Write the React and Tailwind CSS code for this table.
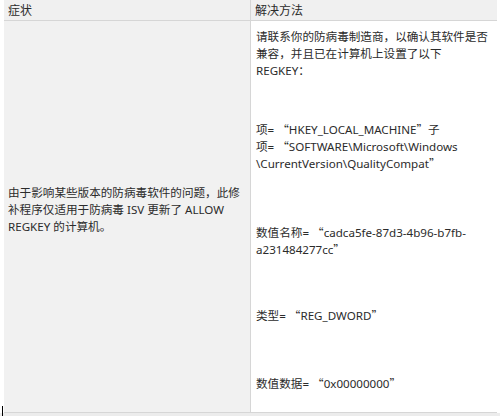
import React from 'react';

const Q = ({ children }) => (
  <span className="[font-family:'Noto_Sans_CJK_SC',sans-serif]">{children}</span>
);

const App = () => {
  return (
    <div className="w-[500px] h-[416px] bg-white overflow-hidden relative text-[#2b2b2b] [font-family:'Noto_Sans','Noto_Sans_CJK_SC',sans-serif]">
      <div className="ml-[4px] w-[493px] border-b border-[#d6d6d6]">
        {/* header */}
        <div className="grid grid-cols-[247px_246px] h-[21px] bg-[#f0f0f0] border-b border-[#d6d6d6] text-[12px] leading-[21px]">
          <div className="pl-[4px] border-r border-[#d6d6d6]">症状</div>
          <div className="pl-[4px]">解决方法</div>
        </div>
        {/* body */}
        <div className="grid grid-cols-[247px_246px] h-[391px] text-[11.6px] leading-[17px]">
          <div className="bg-[#f1f1f1] border-r border-[#d6d6d6] flex items-center pl-[4px] pr-[4px] pb-[14px]">
            <p>
              由于影响某些版本的防病毒软件的问题，此修<br />
              补程序仅适用于防病毒 ISV 更新了 ALLOW<br />
              REGKEY 的计算机。
            </p>
          </div>
          <div className="bg-white pl-[5px] pt-[7px] whitespace-nowrap">
            <p>
              请联系你的防病毒制造商，以确认其软件是否<br />
              兼容，并且已在计算机上设置了以下<br />
              REGKEY：
            </p>
            <p className="mt-[42px]">
              项= <Q>“</Q>HKEY_LOCAL_MACHINE<Q>”</Q>子<br />
              项= <Q>“</Q>SOFTWARE\Microsoft\Windows<br />
              \CurrentVersion\QualityCompat<Q>”</Q>
            </p>
            <p className="mt-[52px]">
              数值名称= <Q>“</Q>cadca5fe-87d3-4b96-b7fb-<br />
              a231484277cc<Q>”</Q>
            </p>
            <p className="mt-[49px]">
              类型= <Q>“</Q>REG_DWORD<Q>”</Q>
            </p>
            <p className="mt-[51px]">
              数值数据= <Q>“</Q>0x00000000<Q>”</Q>
            </p>
          </div>
        </div>
      </div>
      <div className="h-[4px] bg-[#ececec]" />
      <div className="absolute left-[2px] top-[406px] w-[1px] h-[10px] bg-black" />
    </div>
  );
};

export default App;
